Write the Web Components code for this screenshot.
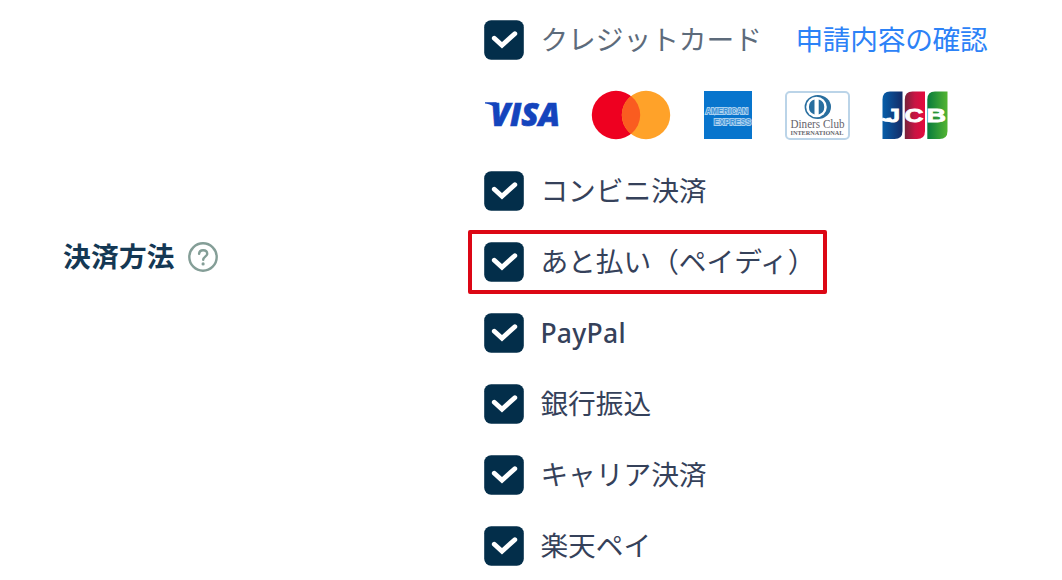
<!DOCTYPE html>
<html lang="ja">
<head>
<meta charset="utf-8">
<title>決済方法</title>
<style>
html, body { margin: 0; height: 580px; overflow: hidden; background: #fff; }
body { font-family: "Noto Sans CJK JP", sans-serif; font-size: 27.7px; line-height: 40px; color: #35415a; }
</style>
</head>
<body>
<payment-settings></payment-settings>
<script>
function define(name, html) {
  const template = document.createElement('template');
  template.innerHTML = html;
  customElements.define(name, class extends HTMLElement {
    constructor() {
      super();
      this.attachShadow({ mode: 'open' }).append(template.content.cloneNode(true));
    }
  });
}

define('help-icon', `
<style>:host { display: block; width: 32px; height: 32px; } svg { display: block; }</style>
<svg width="32" height="32" viewBox="0 0 32 32" fill="none" stroke="#849e97" stroke-linecap="round">
  <circle cx="16" cy="16" r="13.7" stroke-width="2.4"/>
  <path d="M12.1 12.9c.1-2.3 1.7-3.7 4-3.7 2.4 0 4.1 1.4 4.1 3.5 0 2.9-4 3-4 6.1" stroke-width="2.4"/>
  <circle cx="16.1" cy="22.9" r="1.6" fill="#849e97" stroke="none"/>
</svg>`);

define('field-label', `
<style>
:host { display: flex; align-items: center; gap: 11.5px; font-weight: 700; color: #143854; }
span { letter-spacing: .25px; position: relative; top: -2px; left: -1px; }
</style>
<span><slot></slot></span><help-icon></help-icon>`);

define('check-option', `
<style>
:host { display: flex; align-items: center; height: 71px; padding-left: 17.4px; box-sizing: border-box; }
svg { flex: none; margin-right: 16px; }
.text { white-space: nowrap; position: relative; top: -2px; }
:host([muted]) .text { color: #5d6b7b; }
:host([latin]) .text { font: 500 26.5px/40px "Noto Sans", sans-serif; letter-spacing: .3px; top: 0; }
:host([highlight]) { position: relative; }
:host([highlight])::before { content: ""; position: absolute; left: .5px; top: 4px; width: 359px; height: 64px; box-sizing: border-box; border: 4px solid #dc0715; border-radius: 2px; }
</style>
<svg width="40" height="40" viewBox="0 0 40 40">
  <rect x=".2" y=".2" width="39.6" height="39.6" rx="7" fill="#032e4a"/>
  <path d="M10.3 18.2l7.7 7 12.8-11.5" fill="none" stroke="#fff" stroke-width="4.8" stroke-linecap="round" stroke-linejoin="miter"/>
</svg>
<span class="text"><slot></slot></span><slot name="action"></slot>`);

define('text-link', `
<style>
:host { display: block; margin-left: 34px; position: relative; top: -2px; left: -.5px; color: #2c82f7; letter-spacing: -.25px; white-space: nowrap; }
</style><slot></slot>`);

define('logo-visa', `
<style>:host, svg { display: block; overflow: visible; }</style>
<svg width="76" height="28" viewBox="0 0 76 28">
  <path d="M1 1.2h11.500l3 11C12 5 6 3.200 1 2.400z" fill="#1444bd"/>
  <text x="6.5" y="25" font-family="Open Sans" font-weight="800" font-style="italic" font-size="32.5" textLength="69.5" lengthAdjust="spacingAndGlyphs" fill="#1444bd" stroke="#1444bd" stroke-width=".7">VISA</text>
</svg>`);

define('logo-mastercard', `
<style>:host, svg { display: block; }</style>
<svg width="80" height="50" viewBox="0 0 80 50">
  <circle cx="25" cy="25" r="24.2" fill="#ee0020"/>
  <circle cx="55" cy="25" r="24.2" fill="#ffa229"/>
  <path d="M40 6a24.2 24.2 0 0 1 0 38 24.2 24.2 0 0 1 0-38z" fill="#fa5c20"/>
</svg>`);

define('logo-amex', `
<style>:host, svg { display: block; overflow: visible; }</style>
<svg width="48" height="48" viewBox="0 0 48 48" font-family="Liberation Sans" font-weight="700" font-size="8.5">
  <rect width="48" height="48" fill="#0875cd"/>
  <g fill="#4094d8" stroke="#a9d0ef" stroke-width="2" paint-order="stroke">
    <text x="1.5" y="22.5" textLength="42.5" lengthAdjust="spacingAndGlyphs">AMERICAN</text>
    <text x="10" y="34" textLength="37" lengthAdjust="spacingAndGlyphs">EXPRESS</text>
  </g>
</svg>`);

define('logo-diners', `
<style>:host, svg { display: block; overflow: visible; }</style>
<svg width="65" height="49" viewBox="0 0 65 49" font-family="Liberation Serif" fill="#65646c">
  <rect x="1" y="1" width="63" height="47" rx="4" fill="#fff" stroke="#bbd4e8" stroke-width="2"/>
  <ellipse cx="32.8" cy="16" rx="13.2" ry="12" fill="#286e9f"/>
  <circle cx="31.5" cy="16" r="10.3" fill="#fff"/>
  <path d="M29.5 8.6a7.7 7.7 0 0 0 0 14.8zM33.7 8.6a7.7 7.7 0 0 1 0 14.8z" fill="#286e9f"/>
  <text x="5.5" y="37" font-size="13.5" textLength="54" lengthAdjust="spacingAndGlyphs">Diners Club</text>
  <text x="5.5" y="43.8" font-size="6" font-weight="700" textLength="53" lengthAdjust="spacingAndGlyphs">INTERNATIONAL</text>
</svg>`);

define('logo-jcb', `
<style>:host, svg { display: block; overflow: visible; }</style>
<svg width="66" height="49" viewBox="0 0 66 49" font-family="Liberation Sans" font-weight="700" font-size="19" fill="#fff">
  <defs>
    <linearGradient id="b"><stop offset="0" stop-color="#075ea9"/><stop offset="1" stop-color="#132b67"/></linearGradient>
    <linearGradient id="r"><stop offset="0" stop-color="#76233b"/><stop offset=".5" stop-color="#c91443"/><stop offset="1" stop-color="#e30b3d"/></linearGradient>
    <linearGradient id="g"><stop offset="0" stop-color="#087b3c"/><stop offset="1" stop-color="#53b532"/></linearGradient>
  </defs>
  <path d="M8 .5h12.5V40q0 8-8 8H.5V8.5q0-8 7.5-8z" fill="url(#b)"/>
  <path d="M30.5 .5H43V40q0 8-8 8H22.8V8.5q0-8 7.700-8z" fill="url(#r)"/>
  <path d="M53 .5h12.5V40q0 8-8 8H45.3V8.5q0-8 7.700-8z" fill="url(#g)"/>
  <path d="M0 28q5 2 10 1.3" fill="none" stroke="#fff" stroke-width="3"/>
  <g stroke="#fff" stroke-width=".8">
    <text x="4.5" y="30.7" textLength="13.5" lengthAdjust="spacingAndGlyphs">J</text>
    <text x="22.5" y="30.7" textLength="19" lengthAdjust="spacingAndGlyphs">C</text>
    <text x="44.5" y="30.7" textLength="19.5" lengthAdjust="spacingAndGlyphs">B</text>
  </g>
</svg>`);

define('card-brands', `
<style>
:host { display: flex; align-items: center; height: 80px; padding-left: 17px; }
logo-visa { margin-right: 31px; }
logo-mastercard { margin-right: 33px; }
logo-amex { margin-right: 32.500px; }
logo-diners { margin-right: 32.500px; }
</style>
<logo-visa></logo-visa><logo-mastercard></logo-mastercard><logo-amex></logo-amex><logo-diners></logo-diners><logo-jcb></logo-jcb>`);

define('payment-settings', `
<style>
:host { display: grid; grid-template-columns: 403px 1fr; height: 580px; padding-left: 64px; box-sizing: border-box; overflow: hidden; }
field-label { align-self: start; margin-top: 237px; }
section { padding-top: 4px; }
</style>
<field-label>決済方法</field-label>
<section>
  <check-option muted>クレジットカード<text-link slot="action">申請内容の確認</text-link></check-option>
  <card-brands></card-brands>
  <check-option>コンビニ決済</check-option>
  <check-option highlight>あと払い（ペイディ）</check-option>
  <check-option latin>PayPal</check-option>
  <check-option>銀行振込</check-option>
  <check-option>キャリア決済</check-option>
  <check-option>楽天ペイ</check-option>
</section>`);
</script>
</body>
</html>
